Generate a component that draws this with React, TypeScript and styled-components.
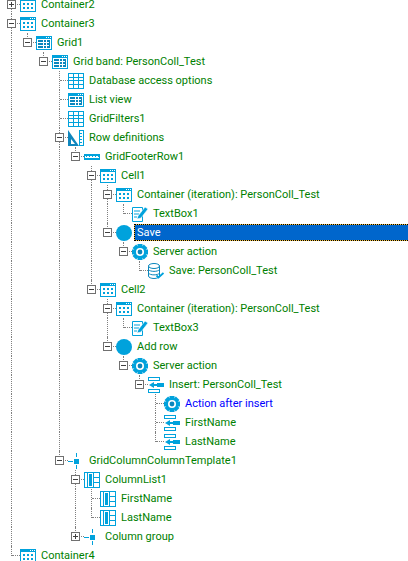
import React from 'react';
import styled, { createGlobalStyle } from 'styled-components';

const BLUE = '#00a2dc';
const DARK = '#0a86bc';

const GlobalStyle = createGlobalStyle`
  html, body {
    margin: 0;
    padding: 0;
    height: 100%;
    background: #ffffff;
    overflow: hidden;
  }
`;

// icons
const WindowFrame = () => (
  <>
    <rect x="0.5" y="1.5" width="15" height="13" fill="#fff" stroke={BLUE} />
    <rect x="0" y="1" width="16" height="3" fill={BLUE} />
    <rect x="10" y="2" width="1" height="1" fill="#fff" />
    <rect x="12" y="2" width="1" height="1" fill="#fff" />
    <rect x="14" y="2" width="1" height="1" fill="#fff" />
  </>
);

const ContainerIcon = () => (
  <svg width="16" height="16" viewBox="0 0 16 16">
    <WindowFrame />
    {[3, 7, 11].map((x) =>
      [6, 10].map((y) => <rect key={`${x}-${y}`} x={x} y={y} width="2" height="2" fill={BLUE} />)
    )}
  </svg>
);

const GridIcon = () => (
  <svg width="16" height="16" viewBox="0 0 16 16">
    <WindowFrame />
    <rect x="2" y="5" width="5" height="2" fill={DARK} />
    <rect x="2" y="8" width="5" height="2" fill={DARK} />
    <rect x="2" y="11" width="5" height="2" fill={DARK} />
    {[8, 11].map((x) =>
      [5, 8, 11].map((y) => <rect key={`${x}-${y}`} x={x} y={y} width="2" height="2" fill={DARK} />)
    )}
    <rect x="13" y="5" width="1" height="8" fill={DARK} />
  </svg>
);

const TableIcon = () => (
  <svg width="16" height="16" viewBox="0 0 16 16">
    <rect x="0.5" y="0.5" width="15" height="15" fill="#fff" stroke={BLUE} />
    <path d="M0 4.5H16M0 7.5H16M0 11.5H16M5.5 0V16M10.5 0V16" stroke={BLUE} fill="none" />
  </svg>
);

const RulerIcon = () => (
  <svg width="16" height="16" viewBox="0 0 16 16">
    <path d="M0 0L11 16H0Z" fill="#0f86bd" />
    <path d="M3 9L7 14H3Z" fill="#fff" />
    <rect x="11" y="0" width="5" height="16" fill={BLUE} />
    <rect x="12" y="1" width="3" height="14" fill="#fff" />
    <path d="M12 3.5H14M12 6.5H14M12 9.5H14M12 12.5H14" stroke={BLUE} />
  </svg>
);

const FooterRowIcon = () => (
  <svg width="16" height="16" viewBox="0 0 16 16">
    <rect x="0" y="5" width="16" height="6" fill={BLUE} />
    <rect x="1" y="7" width="14" height="2" fill="#fff" />
    {[2, 5, 8, 11, 14].map((x) => (
      <rect key={x} x={x} y="7" width="1" height="1" fill={BLUE} />
    ))}
  </svg>
);

const TextBoxIcon = () => (
  <svg width="16" height="16" viewBox="0 0 16 16">
    <path d="M0.5 1.5H10.5V15.5H0.5Z" fill="#fff" stroke={BLUE} />
    <path d="M2 5H8M2 8H7M2 11H5" stroke={BLUE} />
    <path d="M5 13L6 10L13 1L16 3L9 12Z" fill={BLUE} stroke="#fff" strokeWidth="0.6" />
  </svg>
);

const CircleIcon = () => (
  <svg width="16" height="16" viewBox="0 0 16 16">
    <circle cx="8" cy="8" r="8" fill={BLUE} />
  </svg>
);

const GearIcon = () => (
  <svg width="16" height="16" viewBox="0 0 16 16">
    {[0, 45, 90, 135].map((deg) => (
      <rect key={deg} x="5.5" y="0" width="5" height="16" fill={BLUE} transform={`rotate(${deg} 8 8)`} />
    ))}
    <circle cx="8" cy="8" r="6" fill={BLUE} />
    <circle cx="8" cy="8" r="4" fill="#fff" />
    <circle cx="8" cy="8" r="2.4" fill={DARK} />
  </svg>
);

const DatabaseIcon = () => (
  <svg width="16" height="16" viewBox="0 0 16 16">
    <path d="M0.5 3V13C0.5 14.4 3 15.5 6 15.5C9 15.5 11.5 14.4 11.5 13V3Z" fill="#fff" stroke={DARK} />
    <ellipse cx="6" cy="3" rx="5.5" ry="2.5" fill="#fff" stroke={DARK} />
    <path d="M0.5 6.5C2 9 10 9 11.5 6.5M0.5 10C2 12.5 10 12.5 11.5 10" stroke={DARK} fill="none" />
    <path d="M8.5 12.5L10.5 14.5L15.5 10" stroke={BLUE} strokeWidth="1.8" fill="none" />
  </svg>
);

const InsertIcon = () => (
  <svg width="16" height="16" viewBox="0 0 16 16">
    <rect x="0.5" y="0.5" width="11" height="3" fill="#fff" stroke={BLUE} />
    <rect x="0.5" y="12.5" width="11" height="3" fill="#fff" stroke={BLUE} />
    <rect x="9" y="6" width="7" height="4" fill={BLUE} />
    <rect x="5" y="7" width="4" height="2" fill={BLUE} />
    <path d="M1 8L6 5V11Z" fill={BLUE} />
  </svg>
);

const ColumnIcon = () => (
  <svg width="16" height="16" viewBox="0 0 16 16">
    <path d="M8.5 0V4M8.5 12V16M0 8.5H5" stroke={BLUE} />
    <rect x="6" y="6" width="5" height="5" fill={BLUE} />
  </svg>
);

const ColumnListIcon = () => (
  <svg width="16" height="16" viewBox="0 0 16 16">
    <rect x="0.5" y="0.5" width="15" height="15" fill="#fff" stroke={BLUE} />
    <rect x="3" y="0" width="1" height="16" fill={BLUE} />
    <rect x="5" y="2" width="3" height="12" fill={BLUE} />
    <path d="M9.5 0V16M9 5.5H16M9 10.5H16" stroke={BLUE} />
  </svg>
);

// data
type TreeNode = {
  label: string;
  icon: React.FC;
  collapsed?: boolean;
  link?: boolean;
  selected?: boolean;
  children?: TreeNode[];
};

const tree: TreeNode[] = [
  { label: 'Container2', icon: ContainerIcon, collapsed: true },
  {
    label: 'Container3',
    icon: ContainerIcon,
    children: [
      {
        label: 'Grid1',
        icon: GridIcon,
        children: [
          {
            label: 'Grid band: PersonColl_Test',
            icon: GridIcon,
            children: [
              { label: 'Database access options', icon: TableIcon },
              { label: 'List view', icon: GridIcon },
              { label: 'GridFilters1', icon: TableIcon },
              {
                label: 'Row definitions',
                icon: RulerIcon,
                children: [
                  {
                    label: 'GridFooterRow1',
                    icon: FooterRowIcon,
                    children: [
                      {
                        label: 'Cell1',
                        icon: ContainerIcon,
                        children: [
                          {
                            label: 'Container (iteration): PersonColl_Test',
                            icon: ContainerIcon,
                            children: [{ label: 'TextBox1', icon: TextBoxIcon }],
                          },
                          {
                            label: 'Save',
                            icon: CircleIcon,
                            selected: true,
                            children: [
                              {
                                label: 'Server action',
                                icon: GearIcon,
                                children: [{ label: 'Save: PersonColl_Test', icon: DatabaseIcon }],
                              },
                            ],
                          },
                        ],
                      },
                      {
                        label: 'Cell2',
                        icon: ContainerIcon,
                        children: [
                          {
                            label: 'Container (iteration): PersonColl_Test',
                            icon: ContainerIcon,
                            children: [{ label: 'TextBox3', icon: TextBoxIcon }],
                          },
                          {
                            label: 'Add row',
                            icon: CircleIcon,
                            children: [
                              {
                                label: 'Server action',
                                icon: GearIcon,
                                children: [
                                  {
                                    label: 'Insert: PersonColl_Test',
                                    icon: InsertIcon,
                                    children: [
                                      { label: 'Action after insert', icon: GearIcon, link: true },
                                      { label: 'FirstName', icon: InsertIcon },
                                      { label: 'LastName', icon: InsertIcon },
                                    ],
                                  },
                                ],
                              },
                            ],
                          },
                        ],
                      },
                    ],
                  },
                ],
              },
              {
                label: 'GridColumnColumnTemplate1',
                icon: ColumnIcon,
                children: [
                  {
                    label: 'ColumnList1',
                    icon: ColumnListIcon,
                    children: [
                      { label: 'FirstName', icon: ColumnListIcon },
                      { label: 'LastName', icon: ColumnListIcon },
                    ],
                  },
                  { label: 'Column group', icon: ColumnIcon, collapsed: true },
                ],
              },
            ],
          },
        ],
      },
    ],
  },
  { label: 'Container4', icon: ContainerIcon },
];

// styled parts
const Tree = styled.div`
  margin-top: -5px;
  padding-left: 3px;
  font-family: Roboto, sans-serif;
  font-size: 11px;
`;

const Row = styled.div`
  display: flex;
  align-items: center;
  height: 19px;
  white-space: nowrap;
`;

const Guide = styled.span<{ $up?: boolean; $down?: boolean; $right?: boolean }>`
  position: relative;
  flex: none;
  width: 16px;
  height: 19px;

  &::before {
    content: '';
    display: ${(p) => (p.$up || p.$down ? 'block' : 'none')};
    position: absolute;
    left: 8px;
    top: ${(p) => (p.$up ? '0' : '9px')};
    bottom: ${(p) => (p.$down ? '0' : '9px')};
    border-left: 1px dotted #808080;
  }

  &::after {
    content: '';
    display: ${(p) => (p.$right ? 'block' : 'none')};
    position: absolute;
    left: 9px;
    right: -1px;
    top: 9px;
    border-top: 1px dotted #808080;
  }
`;

const Expander = styled.span`
  position: absolute;
  left: 4px;
  top: 5px;
  width: 7px;
  height: 7px;
  border: 1px solid #707070;
  background: #ffffff;
  z-index: 1;

  &::before {
    content: '';
    position: absolute;
    left: 1px;
    right: 1px;
    top: 3px;
    height: 1px;
    background: #404040;
  }
`;

const Plus = styled.span`
  position: absolute;
  left: 3px;
  top: 1px;
  bottom: 1px;
  width: 1px;
  background: #404040;
`;

const IconSlot = styled.span`
  flex: none;
  display: flex;
  width: 16px;
  height: 16px;
  margin-left: 1px;
`;

const Label = styled.span<{ $link?: boolean }>`
  flex: none;
  line-height: 17px;
  margin-left: 5px;
  color: ${(p) => (p.$link ? '#0000ff' : '#008000')};
`;

const SelectedLabel = styled.span`
  flex: 1;
  box-sizing: border-box;
  height: 17px;
  line-height: 15px;
  margin-left: 2px;
  padding-left: 2px;
  color: #ffffff;
  border: 1px dotted #000000;
  border-right: none;
  background: linear-gradient(#0066cc, #0066cc) padding-box, linear-gradient(#f0c040, #f0c040) border-box;
`;

// one flat row per visible node, the guide columns come from the ancestors
const renderNodes = (nodes: TreeNode[], open: boolean[]): React.ReactNode[] =>
  nodes.flatMap((node, index) => {
    const last = index === nodes.length - 1;
    const Icon = node.icon;
    const hasExpander = node.collapsed || !!node.children;
    const row = (
      <Row key={`${open.length}-${node.label}-${index}-${open.join()}`}>
        {open.map((on, i) => (
          <Guide key={i} $up={on} $down={on} />
        ))}
        <Guide $up $down={!last} $right>
          {hasExpander && <Expander>{node.collapsed && <Plus />}</Expander>}
        </Guide>
        <IconSlot>
          <Icon />
        </IconSlot>
        {node.selected ? (
          <SelectedLabel>{node.label}</SelectedLabel>
        ) : (
          <Label $link={node.link}>{node.label}</Label>
        )}
      </Row>
    );
    return [row, ...renderNodes(node.children ?? [], [...open, !last])];
  });

const App = () => (
  <>
    <GlobalStyle />
    <Tree>{renderNodes(tree, [])}</Tree>
  </>
);

export default App;
